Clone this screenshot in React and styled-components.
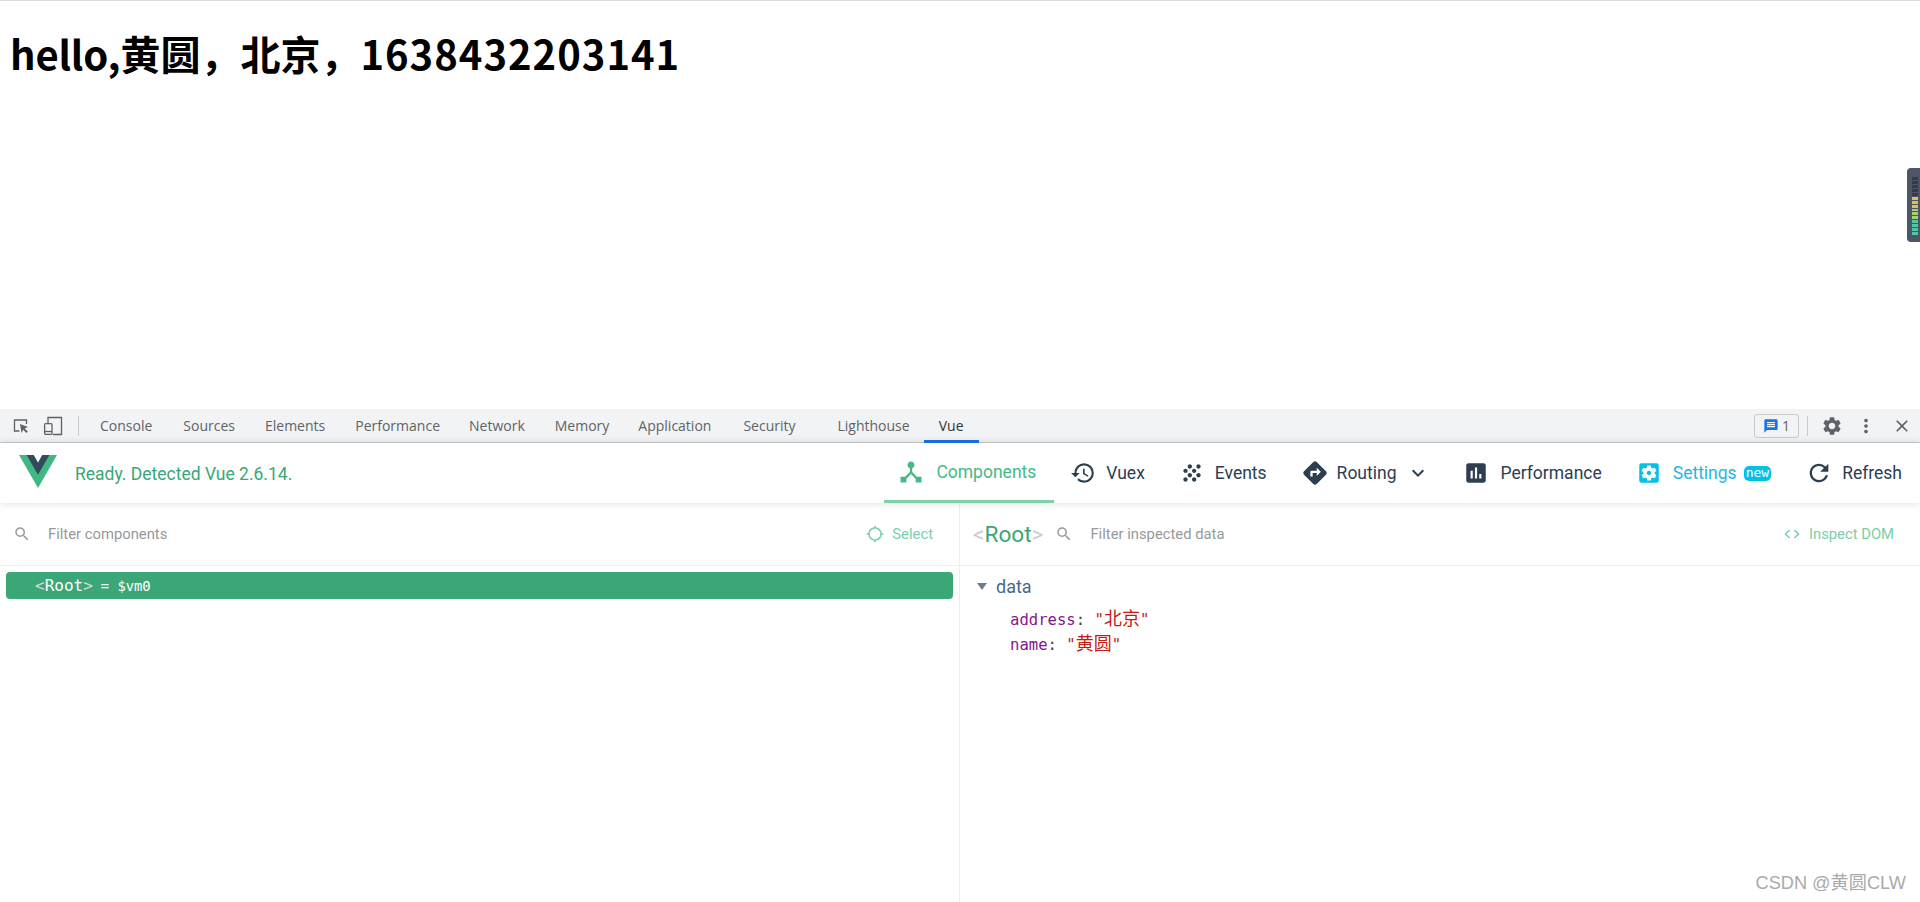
import React from "react";
import styled, { createGlobalStyle } from "styled-components";
import {
  MdDeviceHub,
  MdHistory,
  MdGrain,
  MdDirections,
  MdAssessment,
  MdSettingsApplications,
  MdRefresh,
  MdKeyboardArrowDown,
  MdSearch,
  MdGpsNotFixed,
  MdCode,
  MdSettings,
  MdMoreVert,
  MdClose,
  MdMessage,
} from "react-icons/md";

const GREEN = "#3ba776";
const LIGHT_GREEN = "#44bb85";
const DARK = "#2c3e50";
const CYAN = "#03c2e6";
const CJK = '"Noto Sans CJK SC", sans-serif';

const GlobalStyle = createGlobalStyle`
  html, body {
    margin: 0;
    padding: 0;
    background: #fff;
    overflow: hidden;
  }
  * {
    box-sizing: border-box;
  }
`;

const tabs = [
  { label: "Console", gap: 31 },
  { label: "Sources", gap: 30 },
  { label: "Elements", gap: 30 },
  { label: "Performance", gap: 29 },
  { label: "Network", gap: 30 },
  { label: "Memory", gap: 29 },
  { label: "Application", gap: 32 },
  { label: "Security", gap: 42 },
  { label: "Lighthouse", gap: 31 },
];

export default function App() {
  return (
    <Page>
      <GlobalStyle />
      <Viewport>
        <Heading>
          <Greeting>hello,</Greeting>黄圆，北京，<Stamp>1638432203141</Stamp>
        </Heading>
        <SideWidget>
          {Array.from({ length: 15 }).map((_, i) => (
            <Level key={i} $index={i} />
          ))}
        </SideWidget>
      </Viewport>

      <TabBar>
        <ToolIcon viewBox="0 0 18 18" width="18" height="18">
          <path d="M7.5 14H2.5V3h12v4" fill="none" stroke="#5f6368" strokeWidth="1.3" />
          <path d="M8 7l8 3-3.4 1.4 3.2 3.2-1.4 1.4-3.2-3.2L9.5 16z" fill="#5f6368" />
        </ToolIcon>
        <ToolIcon viewBox="0 0 20 20" width="20" height="20" $left={13}>
          <path d="M5 7V1.5h13.5v17H10" fill="none" stroke="#5f6368" strokeWidth="1.3" />
          <rect x="1.6" y="7.6" width="7.4" height="10.8" rx="1" fill="none" stroke="#5f6368" strokeWidth="1.3" />
          <path d="M1.6 15.5h7.4" stroke="#5f6368" strokeWidth="1.3" />
        </ToolIcon>
        <TabDivider />
        {tabs.map((tab) => (
          <Tab key={tab.label} $gap={tab.gap}>
            {tab.label}
          </Tab>
        ))}
        <ActiveTab>Vue</ActiveTab>
        <TabBarRight>
          <IssueBadge>
            <MdMessage size={16} color="#1a73e8" />
            <span>1</span>
          </IssueBadge>
          <RightDivider />
          <GearIcon size={22} color="#5f6368" />
          <MdMoreVert size={22} color="#5f6368" />
          <MdClose size={20} color="#5f6368" />
        </TabBarRight>
      </TabBar>

      <Header>
        <VueLogo viewBox="0 0 261.76 226.69" width="38" height="33">
          <path d="M161.096.001l-30.225 52.351L100.647.001H-.005l130.877 226.688L261.749.001z" fill="#41b883" />
          <path d="M161.096.001l-30.225 52.351L100.647.001H52.346l78.526 136.01L209.398.001z" fill="#34495e" />
        </VueLogo>
        <Status>Ready. Detected Vue 2.6.14.</Status>
        <Nav>
          <NavItem $active>
            <MdDeviceHub size={28} />
            <NavLabel $gap={11}>Components</NavLabel>
          </NavItem>
          <NavItem>
            <MdHistory size={26} />
            <NavLabel $gap={10}>Vuex</NavLabel>
          </NavItem>
          <NavItem>
            <MdGrain size={26} />
            <NavLabel $gap={10}>Events</NavLabel>
          </NavItem>
          <NavItem>
            <MdDirections size={28} />
            <NavLabel $gap={8}>Routing</NavLabel>
            <Chevron>
              <MdKeyboardArrowDown size={24} />
            </Chevron>
          </NavItem>
          <NavItem>
            <MdAssessment size={26} />
            <NavLabel $gap={12}>Performance</NavLabel>
          </NavItem>
          <NavItem $color={CYAN}>
            <MdSettingsApplications size={26} />
            <NavLabel $gap={11} $color="#1fb6e6">
              Settings
            </NavLabel>
            <NewBadge>new</NewBadge>
          </NavItem>
          <NavItem>
            <MdRefresh size={28} />
            <NavLabel $gap={9}>Refresh</NavLabel>
          </NavItem>
        </Nav>
      </Header>

      <Split>
        <LeftPane>
          <FilterRow>
            <SearchIcon>
              <MdSearch size={18} />
            </SearchIcon>
            <FilterText>Filter components</FilterText>
            <ActionButton>
              <MdGpsNotFixed size={18} />
              Select
            </ActionButton>
          </FilterRow>
          <TreeRow>
            <Bracket>&lt;</Bracket>
            <RootName>Root</RootName>
            <Bracket>&gt;</Bracket>
            <VmRef>= $vm0</VmRef>
          </TreeRow>
        </LeftPane>
        <RightPane>
          <FilterRow>
            <InspectTitle>
              <InspectBracket>&lt;</InspectBracket>Root<InspectBracket>&gt;</InspectBracket>
            </InspectTitle>
            <SearchIcon $inspect>
              <MdSearch size={18} />
            </SearchIcon>
            <FilterText>Filter inspected data</FilterText>
            <ActionButton $inspect>
              <MdCode size={18} />
              Inspect DOM
            </ActionButton>
          </FilterRow>
          <DataSection>
            <DataHeading>
              <Caret />
              data
            </DataHeading>
            <DataRow>
              <Key>address</Key>: <Value>"<Han>北京</Han>"</Value>
            </DataRow>
            <DataRow>
              <Key>name</Key>: <Value>"<Han>黄圆</Han>"</Value>
            </DataRow>
          </DataSection>
        </RightPane>
      </Split>
      <Watermark>CSDN @黄圆CLW</Watermark>
    </Page>
  );
}

const Page = styled.div`
  position: relative;
  width: 1920px;
  height: 902px;
  overflow: hidden;
  display: flex;
  flex-direction: column;
  background: #fff;
`;

const Viewport = styled.div`
  position: relative;
  height: 409px;
  border-top: 1px solid #dcdcdc;
  flex: none;
`;

const Heading = styled.h1`
  margin: 0;
  padding: 25px 0 0 10px;
  font-family: ${CJK};
  font-size: 40px;
  line-height: 54px;
  font-weight: 700;
  color: #000;
  white-space: nowrap;
`;

const Greeting = styled.span`
  letter-spacing: -0.2px;
`;

const Stamp = styled.span`
  letter-spacing: 1px;
`;

const SideWidget = styled.div`
  position: absolute;
  right: 0;
  top: 167px;
  width: 13px;
  height: 74px;
  padding: 9px 2px 7px 5px;
  background: #4e5566;
  border-radius: 4px 0 0 4px;
  display: flex;
  flex-direction: column;
  gap: 1px;
`;

const Level = styled.div`
  flex: 1;
  background: ${(p) =>
    p.$index < 5 ? "#333a48" : p.$index < 8 ? "#d8c35a" : p.$index < 11 ? "#a9cf76" : "#4fc8a4"};
`;

const TabBar = styled.div`
  height: 34px;
  flex: none;
  display: flex;
  align-items: center;
  padding-left: 12px;
  background: #f1f3f4;
  border-bottom: 1px solid #cbcdd1;
  font-family: "Open Sans", sans-serif;
  font-size: 14px;
  color: #5f6368;
`;

const ToolIcon = styled.svg`
  flex: none;
  margin-left: ${(p) => p.$left || 0}px;
`;

const TabDivider = styled.div`
  width: 1px;
  height: 20px;
  background: #c9cbcf;
  margin: 0 21px 0 15px;
  flex: none;
`;

const RightDivider = styled.div`
  width: 1px;
  height: 20px;
  background: #c9cbcf;
  margin: 0 -2px 0 -7px;
  flex: none;
`;

const GearIcon = styled(MdSettings)`
  margin-right: -3px;
`;

const Tab = styled.div`
  margin-right: ${(p) => p.$gap}px;
  white-space: nowrap;
`;

const ActiveTab = styled.div`
  align-self: stretch;
  width: 55px;
  margin-left: -17px;
  display: flex;
  align-items: center;
  justify-content: center;
  color: #333;
  border-bottom: 3px solid #1a73e8;
  padding-top: 1px;
  height: 34px;
`;

const TabBarRight = styled.div`
  margin-left: auto;
  display: flex;
  align-items: center;
  gap: 15px;
  padding-right: 8px;
`;

const IssueBadge = styled.div`
  display: flex;
  align-items: center;
  gap: 3px;
  height: 24px;
  width: 45px;
  padding-left: 8px;
  border: 1px solid #c9cbcf;
  border-radius: 3px;
`;

const Header = styled.div`
  position: relative;
  z-index: 1;
  height: 60px;
  flex: none;
  display: flex;
  align-items: center;
  background: #fff;
  box-shadow: 0 0 8px rgba(0, 0, 0, 0.15);
  font-family: Roboto, sans-serif;
`;

const VueLogo = styled.svg`
  margin: 0 0 4px 19px;
  flex: none;
`;

const Status = styled.div`
  margin-left: 18px;
  color: ${GREEN};
  font-size: 17.5px;
  padding-top: 1px;
`;

const Nav = styled.nav`
  margin-left: auto;
  display: flex;
  align-self: stretch;
`;

const NavItem = styled.div`
  display: flex;
  align-items: center;
  padding: 0 18px 0 ${(p) => (p.$active ? 13 : 16)}px;
  color: ${(p) => (p.$active ? LIGHT_GREEN : p.$color || DARK)};
  border-bottom: ${(p) => (p.$active ? "3px solid #7fd1aa" : "none")};
`;

const NavLabel = styled.span`
  margin-left: ${(p) => p.$gap}px;
  font-size: 17.5px;
  color: ${(p) => p.$color || "inherit"};
`;

const Chevron = styled.span`
  display: flex;
  margin: 0 -1px 0 9px;
`;

const NewBadge = styled.span`
  margin-left: 7px;
  padding: 0 2px;
  height: 15px;
  line-height: 14px;
  border-radius: 5px;
  background: ${CYAN};
  color: #fff;
  font-family: "DejaVu Sans Mono", monospace;
  font-size: 13px;
`;

const Split = styled.div`
  flex: 1;
  display: flex;
  font-family: Roboto, sans-serif;
`;

const LeftPane = styled.div`
  width: 960px;
  flex: none;
  border-right: 1px solid #eee;
`;

const RightPane = styled.div`
  flex: 1;
`;

const FilterRow = styled.div`
  height: 63px;
  display: flex;
  align-items: center;
  padding: 0 26px 0 13px;
  border-bottom: 1px solid #eee;
`;

const SearchIcon = styled.span`
  display: flex;
  color: #999;
  margin-left: ${(p) => (p.$inspect ? 12 : 0)}px;
`;

const FilterText = styled.span`
  margin-left: 17px;
  font-size: 14.8px;
  color: #999;
`;

const ActionButton = styled.span`
  margin-left: auto;
  display: flex;
  align-items: center;
  gap: 8px;
  font-size: 14.8px;
  color: #78cfa8;
`;

const TreeRow = styled.div`
  margin: 6px 6px 0;
  height: 27px;
  padding-left: 29px;
  display: flex;
  align-items: center;
  border-radius: 4px;
  background: ${GREEN};
  color: #fff;
  font-family: "DejaVu Sans Mono", "Liberation Mono", monospace;
`;

const Bracket = styled.span`
  color: #cfd8d3;
  font-size: 16px;
`;

const RootName = styled.span`
  font-size: 16px;
`;

const VmRef = styled.span`
  margin-left: 8px;
  font-size: 13.8px;
`;

const InspectTitle = styled.span`
  font-size: 22.6px;
  color: ${GREEN};
`;

const InspectBracket = styled.span`
  color: #ccc;
`;

const DataSection = styled.div`
  padding: 9px 0 0 17px;
`;

const DataHeading = styled.div`
  display: flex;
  align-items: center;
  gap: 9px;
  font-size: 18px;
  height: 22px;
  color: #486887;
  margin-bottom: 10px;
`;

const Caret = styled.span`
  width: 0;
  height: 0;
  border-left: 5px solid transparent;
  border-right: 5px solid transparent;
  border-top: 7px solid #6a7c92;
`;

const DataRow = styled.div`
  padding-left: 33px;
  font-family: "DejaVu Sans Mono", ${CJK};
  font-size: 15.6px;
  line-height: 24px;
  color: #444;
`;

const Key = styled.span`
  color: #881391;
`;

const Value = styled.span`
  color: #c41a16;
`;

const Han = styled.span`
  font-size: 18px;
`;

const Watermark = styled.div`
  position: absolute;
  right: 14px;
  bottom: 8px;
  font-family: "Liberation Sans", ${CJK};
  font-size: 18.2px;
  color: #aaa;
`;
